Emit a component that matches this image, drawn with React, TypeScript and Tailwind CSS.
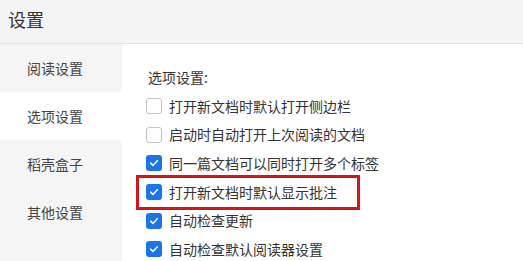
import React from 'react';

const font = { fontFamily: '"Noto Sans CJK SC", "Noto Sans", sans-serif' };

interface Option {
  label: string;
  checked: boolean;
  highlight?: boolean;
}

const navItems = ['阅读设置', '选项设置', '稻壳盒子', '其他设置'];

const options: Option[] = [
  { label: '打开新文档时默认打开侧边栏', checked: false },
  { label: '启动时自动打开上次阅读的文档', checked: false },
  { label: '同一篇文档可以同时打开多个标签', checked: true },
  { label: '打开新文档时默认显示批注', checked: true, highlight: true },
  { label: '自动检查更新', checked: true },
  { label: '自动检查默认阅读器设置', checked: true },
];

function CheckBox({ checked }: { checked: boolean }) {
  if (!checked) {
    return <span className="block w-4 h-4 shrink-0 rounded-[3px] border border-[#c4c4c4] bg-white" />;
  }
  return (
    <span className="flex w-4 h-4 shrink-0 items-center justify-center rounded-[3px] bg-[#1b74e8]">
      <svg viewBox="0 0 16 16" className="w-3 h-3">
        <path d="M3.5 8.2 L6.6 11.2 L12.5 5" fill="none" stroke="white" strokeWidth="2" strokeLinecap="round" strokeLinejoin="round" />
      </svg>
    </span>
  );
}

export default function App() {
  const active = 1;
  return (
    <div className="w-[523px] h-[261px] overflow-hidden bg-white flex flex-col" style={font}>
      {/* header */}
      <div className="h-[44px] shrink-0 bg-[#f4f4f4] border-b border-[#e4e4e4] flex items-center pl-[8px] pb-[5px]">
        <span className="text-[18px] text-[#333]">设置</span>
      </div>

      <div className="flex flex-1 min-h-0">
        {/* sidebar */}
        <div className="w-[122px] shrink-0 flex flex-col bg-white">
          {navItems.map((item, i) => (
            <div
              key={item}
              className={
                'h-[48px] shrink-0 flex items-center pl-[27px] text-[14px] text-[#444] ' +
                (i === active
                  ? 'bg-white'
                  : i === active - 1
                  ? 'bg-[#f5f5f5] rounded-br-[4px]'
                  : i === active + 1
                  ? 'bg-[#f5f5f5] rounded-tr-[4px]'
                  : 'bg-[#f5f5f5]')
              }
            >
              {item}
            </div>
          ))}
          <div className="flex-1 bg-[#f5f5f5]" />
        </div>

        {/* content */}
        <div className="flex-1 pl-[14px] pt-[23px]">
          <div className="pl-[12px] text-[14px] text-[#333] leading-[20px] mb-[5px]">选项设置:</div>
          <div className="flex flex-col w-[224px]">
            {options.map((o) =>
              o.highlight ? (
                <div
                  key={o.label}
                  className="relative -my-[3.2px] h-[35px] flex items-center gap-[7px] pl-[7px] border-[3px] border-[#d2161f] whitespace-nowrap text-[14px] text-[#333]"
                >
                  <CheckBox checked={o.checked} />
                  <span>{o.label}</span>
                </div>
              ) : (
                <div
                  key={o.label}
                  className="h-[28.6px] flex items-center gap-[7px] pl-[10px] whitespace-nowrap text-[14px] text-[#333]"
                >
                  <CheckBox checked={o.checked} />
                  <span>{o.label}</span>
                </div>
              )
            )}
          </div>
        </div>
      </div>
    </div>
  );
}
